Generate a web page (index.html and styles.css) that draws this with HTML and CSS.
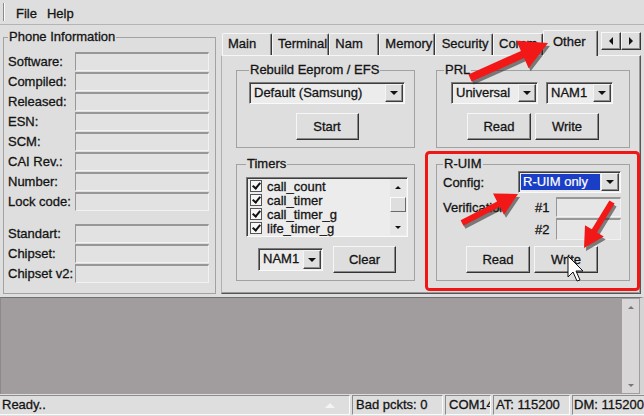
FILE: index.html
```html
<!DOCTYPE html>
<html lang="en">
<head>
    <meta charset="UTF-8">
    <title>Phone Tool</title>
    <link rel="stylesheet" href="styles.css">
</head>
<body>
<div class="window">

    <div class="menubar">
        <span class="grip"></span>
        <span class="menu">File</span>
        <span class="menu">Help</span>
    </div>

    <div class="main">
        <fieldset class="group phone">
            <legend>Phone Information</legend>
            <div class="row"><span class="lbl">Software:</span><span class="field"></span></div>
            <div class="row"><span class="lbl">Compiled:</span><span class="field"></span></div>
            <div class="row"><span class="lbl">Released:</span><span class="field"></span></div>
            <div class="row"><span class="lbl">ESN:</span><span class="field"></span></div>
            <div class="row"><span class="lbl">SCM:</span><span class="field"></span></div>
            <div class="row"><span class="lbl">CAI Rev.:</span><span class="field"></span></div>
            <div class="row"><span class="lbl">Number:</span><span class="field"></span></div>
            <div class="row"><span class="lbl">Lock code:</span><span class="field"></span></div>
            <div class="row gap"><span class="lbl">Standart:</span><span class="field"></span></div>
            <div class="row"><span class="lbl">Chipset:</span><span class="field"></span></div>
            <div class="row"><span class="lbl">Chipset v2:</span><span class="field"></span></div>
        </fieldset>

        <div class="tabs">
            <div class="tabstrip">
                <span class="tab">Main</span>
                <span class="tab">Terminal</span>
                <span class="tab">Nam</span>
                <span class="tab">Memory</span>
                <span class="tab wide">Security</span>
                <span class="tab">Comm</span>
                <span class="tab active">Other</span>
                <span class="scrollbtns">
                    <span class="sbtn prev"></span>
                    <span class="sbtn next"></span>
                </span>
            </div>

            <div class="panel">
                <div class="col left">
                    <fieldset class="group rebuild">
                        <legend>Rebuild Eeprom / EFS</legend>
                        <div class="combo"><span class="val">Default (Samsung)</span><span class="drop"></span></div>
                        <div class="btnrow"><button class="btn">Start</button></div>
                    </fieldset>

                    <fieldset class="group timers">
                        <legend>Timers</legend>
                        <div class="listbox">
                            <ul class="items">
                                <li><span class="check"></span>call_count</li>
                                <li><span class="check"></span>call_timer</li>
                                <li><span class="check"></span>call_timer_g</li>
                                <li><span class="check"></span>life_timer_g</li>
                            </ul>
                            <div class="vscroll">
                                <span class="vbtn up"></span>
                                <span class="vtrack"><span class="vthumb"></span></span>
                                <span class="vbtn down"></span>
                            </div>
                        </div>
                        <div class="bottomrow">
                            <div class="combo nam-small"><span class="val">NAM1</span><span class="drop"></span></div>
                            <button class="btn">Clear</button>
                        </div>
                    </fieldset>
                </div>

                <div class="col right">
                    <fieldset class="group prl">
                        <legend>PRL</legend>
                        <div class="comborow">
                            <div class="combo universal"><span class="val">Universal</span><span class="drop"></span></div>
                            <div class="combo nam"><span class="val">NAM1</span><span class="drop"></span></div>
                        </div>
                        <div class="btnrow pair">
                            <button class="btn">Read</button>
                            <button class="btn">Write</button>
                        </div>
                    </fieldset>

                    <fieldset class="group ruim">
                        <legend>R-UIM</legend>
                        <div class="cfgrow">
                            <span>Config:</span>
                            <div class="combo config"><span class="val sel">R-UIM only</span><span class="drop"></span></div>
                        </div>
                        <div class="verify">
                            <span class="vlabel">Verification</span>
                            <span>#1</span>
                            <span class="field"></span>
                            <span></span>
                            <span>#2</span>
                            <span class="field"></span>
                        </div>
                        <div class="btnrow pair">
                            <button class="btn">Read</button>
                            <button class="btn">Write</button>
                        </div>
                    </fieldset>
                </div>
            </div>
        </div>
    </div>

    <div class="log">
        <div class="logscroll">
            <span class="vbtn up grey"></span>
            <span class="vbtn down grey"></span>
        </div>
    </div>

    <div class="statusbar">
        <span class="pane ready">Ready..<span class="tri"></span></span>
        <span class="pane bad">Bad pckts: 0</span>
        <span class="pane com">COM14</span>
        <span class="pane at">AT: 115200</span>
        <span class="pane dm">DM: 115200</span>
    </div>

    <!-- red marks drawn over the screenshot -->
    <svg class="annot" width="644" height="416" viewBox="0 0 644 416">
        <rect x="426.5" y="152.5" width="212" height="137" rx="3" fill="none" stroke="#f01616" stroke-width="3"/>
        <g fill="#262626" opacity="0.55" transform="translate(2 3)">
            <polygon points="468.4,74.4 520.9,50.9 516.4,40.8 548,43 528.6,68.2 524.1,58.1 471.6,81.6"/>
            <polygon points="460.6,220.3 497.1,201.4 493,193.4 518,194 504,214.8 499.9,206.8 463.4,225.7"/>
            <polygon points="609.4,200.4 591.8,229.3 585,225.2 584,248 603.8,236.6 597,232.5 614.6,203.6"/>
        </g>
        <g fill="#f21818">
            <polygon points="468.4,74.4 520.9,50.9 516.4,40.8 548,43 528.6,68.2 524.1,58.1 471.6,81.6"/>
            <polygon points="460.6,220.3 497.1,201.4 493,193.4 518,194 504,214.8 499.9,206.8 463.4,225.7"/>
            <polygon points="609.4,200.4 591.8,229.3 585,225.2 584,248 603.8,236.6 597,232.5 614.6,203.6"/>
        </g>
        <path d="M568 256 L568 277 L573 272 L577 281 L580 280 L576 271 L583 271 Z" fill="#fff" stroke="#111" stroke-width="1"/>
    </svg>
</div>
</body>
</html>
```

FILE: styles.css
```css
* {
    box-sizing: border-box;
}
html, body {
    margin: 0;
    padding: 0;
}
body {
    width: 644px;
    height: 416px;
    overflow: hidden;
    background-color: #dedede;
    font-family: "Liberation Sans", Arial, sans-serif;
    font-size: 13px;
    color: #141414;
    -webkit-text-stroke: 0.3px #141414;
}
.window {
    position: relative;
    width: 644px;
    height: 416px;
    display: flex;
    flex-direction: column;
    overflow: hidden;
}

/* menu */
.menubar {
    height: 25px;
    display: flex;
    align-items: center;
    padding: 3px 0 0 3px;
    border-bottom: 1px solid #b4b4b4;
}
.grip {
    width: 2px;
    height: 18px;
    margin: -3px 11px 0 0;
    border-left: 1px solid #8a8a8a;
    border-right: 1px solid #fafafa;
}
.menu {
    margin-right: 10px;
}

/* main area */
.main {
    height: 271px;
    display: flex;
    padding: 5px 3px 2px 3px;
}
.group {
    margin: 0;
    min-width: 0;
    border: 1px solid #a2a2a2;
}
.group legend {
    padding: 0 1px;
    line-height: 14px;
}
.phone {
    width: 213px;
    padding: 7px 6px 0 4px;
}
.row {
    display: flex;
    align-items: center;
    height: 20px;
}
.row.gap {
    margin-top: 12px;
}
.lbl {
    width: 67px;
    white-space: nowrap;
}
.field {
    display: block;
    flex: 1;
    height: 19px;
    background: #e2e2e2;
    border-top: 2px solid #979797;
    border-left: 1px solid #979797;
    border-right: 1px solid #f2f2f2;
    border-bottom: 1px solid #f2f2f2;
}

/* tabs */
.tabs {
    width: 420px;
    margin-left: 5px;
    display: flex;
    flex-direction: column;
}
.tabstrip {
    height: 25px;
    display: flex;
    align-items: flex-end;
    padding-left: 1px;
    position: relative;
    z-index: 1;
}
.tab {
    height: 22px;
    min-width: 50px;
    padding: 0 5px;
    line-height: 20px;
    white-space: nowrap;
    border-top: 1px solid #f6f6f6;
    border-left: 1px solid #f6f6f6;
    border-right: 1px solid #363636;
    box-shadow: inset -1px 0 #8c8c8c;
    border-radius: 2px 2px 0 0;
}
.tab.wide {
    padding: 0 7px 0 6px;
}
.tab.active {
    height: 26px;
    min-width: 55px;
    padding: 0 9px;
    margin-bottom: -1px;
    line-height: 22px;
    background: #dedede;
}
.scrollbtns {
    display: flex;
    align-self: flex-start;
    margin: 2px 0 0 3px;
}
.sbtn {
    width: 20px;
    height: 18px;
    display: flex;
    align-items: center;
    justify-content: center;
    border: 1px solid;
    border-color: #f6f6f6 #363636 #363636 #f6f6f6;
    box-shadow: inset -1px -1px #8c8c8c;
}
.sbtn.prev::after {
    content: "";
    border-top: 4px solid transparent;
    border-bottom: 4px solid transparent;
    border-right: 4px solid #111;
}
.sbtn.next::after {
    content: "";
    border-top: 4px solid transparent;
    border-bottom: 4px solid transparent;
    border-left: 4px solid #111;
}
.panel {
    flex: 1;
    display: flex;
    gap: 21px;
    padding: 7px 0 0 14px;
    border: 1px solid;
    border-color: #f6f6f6 #555 #555 #b0b0b0;
    box-shadow: inset -1px -1px #9a9a9a;
}
.col {
    display: flex;
    flex-direction: column;
    gap: 9px;
}
.col.left {
    width: 179px;
}
.col.right {
    width: 194px;
}
.rebuild, .prl {
    height: 85px;
}
.timers, .ruim {
    height: 124px;
}
.rebuild {
    padding: 5px 9px 0 12px;
}
.timers {
    padding: 6px 6px 0 9px;
}
.prl {
    padding: 5px 14px 0 14px;
}
.prl legend {
    margin-left: -7px;
}
.ruim {
    padding: 0 8px 0 6px;
}

/* controls */
.combo {
    height: 22px;
    display: flex;
    padding: 1px 1px 1px 2px;
    background: #ececec;
    border: 1px solid;
    border-color: #7c7c7c #fafafa #fafafa #7c7c7c;
    box-shadow: inset 1px 1px #3e3e3e;
}
.val {
    flex: 1;
    padding-left: 2px;
    line-height: 18px;
    white-space: nowrap;
    overflow: hidden;
}
.val.sel {
    margin: 1px 1px 1px 0;
    line-height: 16px;
    background: #1b3ec6;
    color: #fff;
    -webkit-text-stroke: 0.2px #fff;
}
.drop {
    width: 18px;
    display: flex;
    align-items: center;
    justify-content: center;
    background: #dedede;
    border: 1px solid;
    border-color: #f4f4f4 #3e3e3e #3e3e3e #f4f4f4;
    box-shadow: inset -1px -1px #8c8c8c;
}
.drop::after {
    content: "";
    border-left: 4px solid transparent;
    border-right: 4px solid transparent;
    border-top: 4px solid #111;
}
.btn {
    width: 63px;
    height: 27px;
    padding: 0;
    font: inherit;
    color: inherit;
    background: #dedede;
    border: 1px solid;
    border-color: #f6f6f6 #333 #333 #f6f6f6;
    box-shadow: inset -1px -1px #8a8a8a;
}
.btnrow {
    display: flex;
    justify-content: center;
    margin-top: 9px;
}
.btnrow.pair {
    gap: 4px;
}
.btnrow.pair .btn {
    width: 64px;
}

/* timers list */
.listbox {
    height: 60px;
    display: flex;
    padding: 1px 1px 1px 3px;
    background: #ececec;
    border: 1px solid;
    border-color: #7c7c7c #fafafa #fafafa #7c7c7c;
    box-shadow: inset 1px 1px #3e3e3e;
}
.items {
    flex: 1;
    margin: 0;
    padding: 0;
    list-style: none;
}
.items li {
    height: 14px;
    display: flex;
    align-items: center;
}
.check {
    position: relative;
    width: 12px;
    height: 12px;
    margin-right: 5px;
    background: #f6f6f6;
    border: 1px solid #555;
}
.check::after {
    content: "";
    position: absolute;
    left: 3px;
    top: 0;
    width: 3px;
    height: 6px;
    border: solid #111;
    border-width: 0 2px 2px 0;
    transform: rotate(40deg);
}
.vscroll {
    width: 16px;
    display: flex;
    flex-direction: column;
    background: #e6e6e6;
}
.vbtn {
    height: 16px;
    display: flex;
    align-items: center;
    justify-content: center;
}
.vbtn.up::after {
    content: "";
    border-left: 3px solid transparent;
    border-right: 3px solid transparent;
    border-bottom: 3px solid #111;
}
.vbtn.down::after {
    content: "";
    border-left: 3px solid transparent;
    border-right: 3px solid transparent;
    border-top: 3px solid #111;
}
.vbtn.grey::after {
    border-top-color: #777;
    border-bottom-color: #777;
}
.vtrack {
    flex: 1;
}
.vthumb {
    display: block;
    height: 15px;
    margin-top: 2px;
    background: #dedede;
    border: 1px solid;
    border-color: #fafafa #6a6a6a #6a6a6a #fafafa;
}
.bottomrow {
    display: flex;
    align-items: center;
    gap: 10px;
    margin-top: 9px;
    padding-left: 12px;
}
.nam-small {
    width: 65px;
    height: 23px;
}
.comborow {
    display: flex;
    gap: 8px;
}
.universal {
    width: 87px;
}
.nam {
    width: 67px;
}

/* r-uim */
.cfgrow {
    display: flex;
    align-items: center;
    justify-content: space-between;
    height: 22px;
}
.config {
    width: 103px;
}
.verify {
    display: grid;
    grid-template-columns: 1fr 16px 65px;
    grid-template-rows: 20px 22px;
    column-gap: 5px;
    row-gap: 1px;
    align-items: center;
    margin-top: 4px;
}
.verify .field {
    height: 100%;
    background: #e6e6e6;
}
.ruim .btnrow {
    margin-top: 6px;
}

/* log + status */
.log {
    height: 97px;
    margin-top: 1px;
    display: flex;
    justify-content: flex-end;
    padding: 1px 1px 1px 0;
    background: #a19d9f;
    border-top: 1px solid #707070;
    border-left: 1px solid #8a8a8a;
    border-right: 4px solid #d4d4d4;
}
.logscroll {
    width: 17px;
    display: flex;
    flex-direction: column;
    justify-content: space-between;
    background: #d8d6d7;
}
.statusbar {
    height: 22px;
    display: flex;
    gap: 2px;
    padding-top: 1px;
}
.pane {
    height: 20px;
    line-height: 18px;
    padding-left: 3px;
    white-space: nowrap;
    overflow: hidden;
    border: 1px solid;
    border-color: #8c8c8c #fafafa #fafafa #8c8c8c;
}
.ready {
    width: 350px;
    display: flex;
    align-items: center;
    padding-left: 2px;
    border-left: none;
}
.tri {
    margin: 0 14px 0 auto;
    border-left: 5px solid transparent;
    border-right: 5px solid transparent;
    border-bottom: 5px solid #f4f4f4;
}
.bad {
    width: 91px;
}
.com {
    width: 46px;
}
.at {
    width: 77px;
    padding-left: 2px;
}
.dm {
    flex: 1;
    padding-left: 1px;
    border-right: none;
}
.annot {
    position: absolute;
    left: 0;
    top: 0;
    z-index: 5;
    pointer-events: none;
}
```
